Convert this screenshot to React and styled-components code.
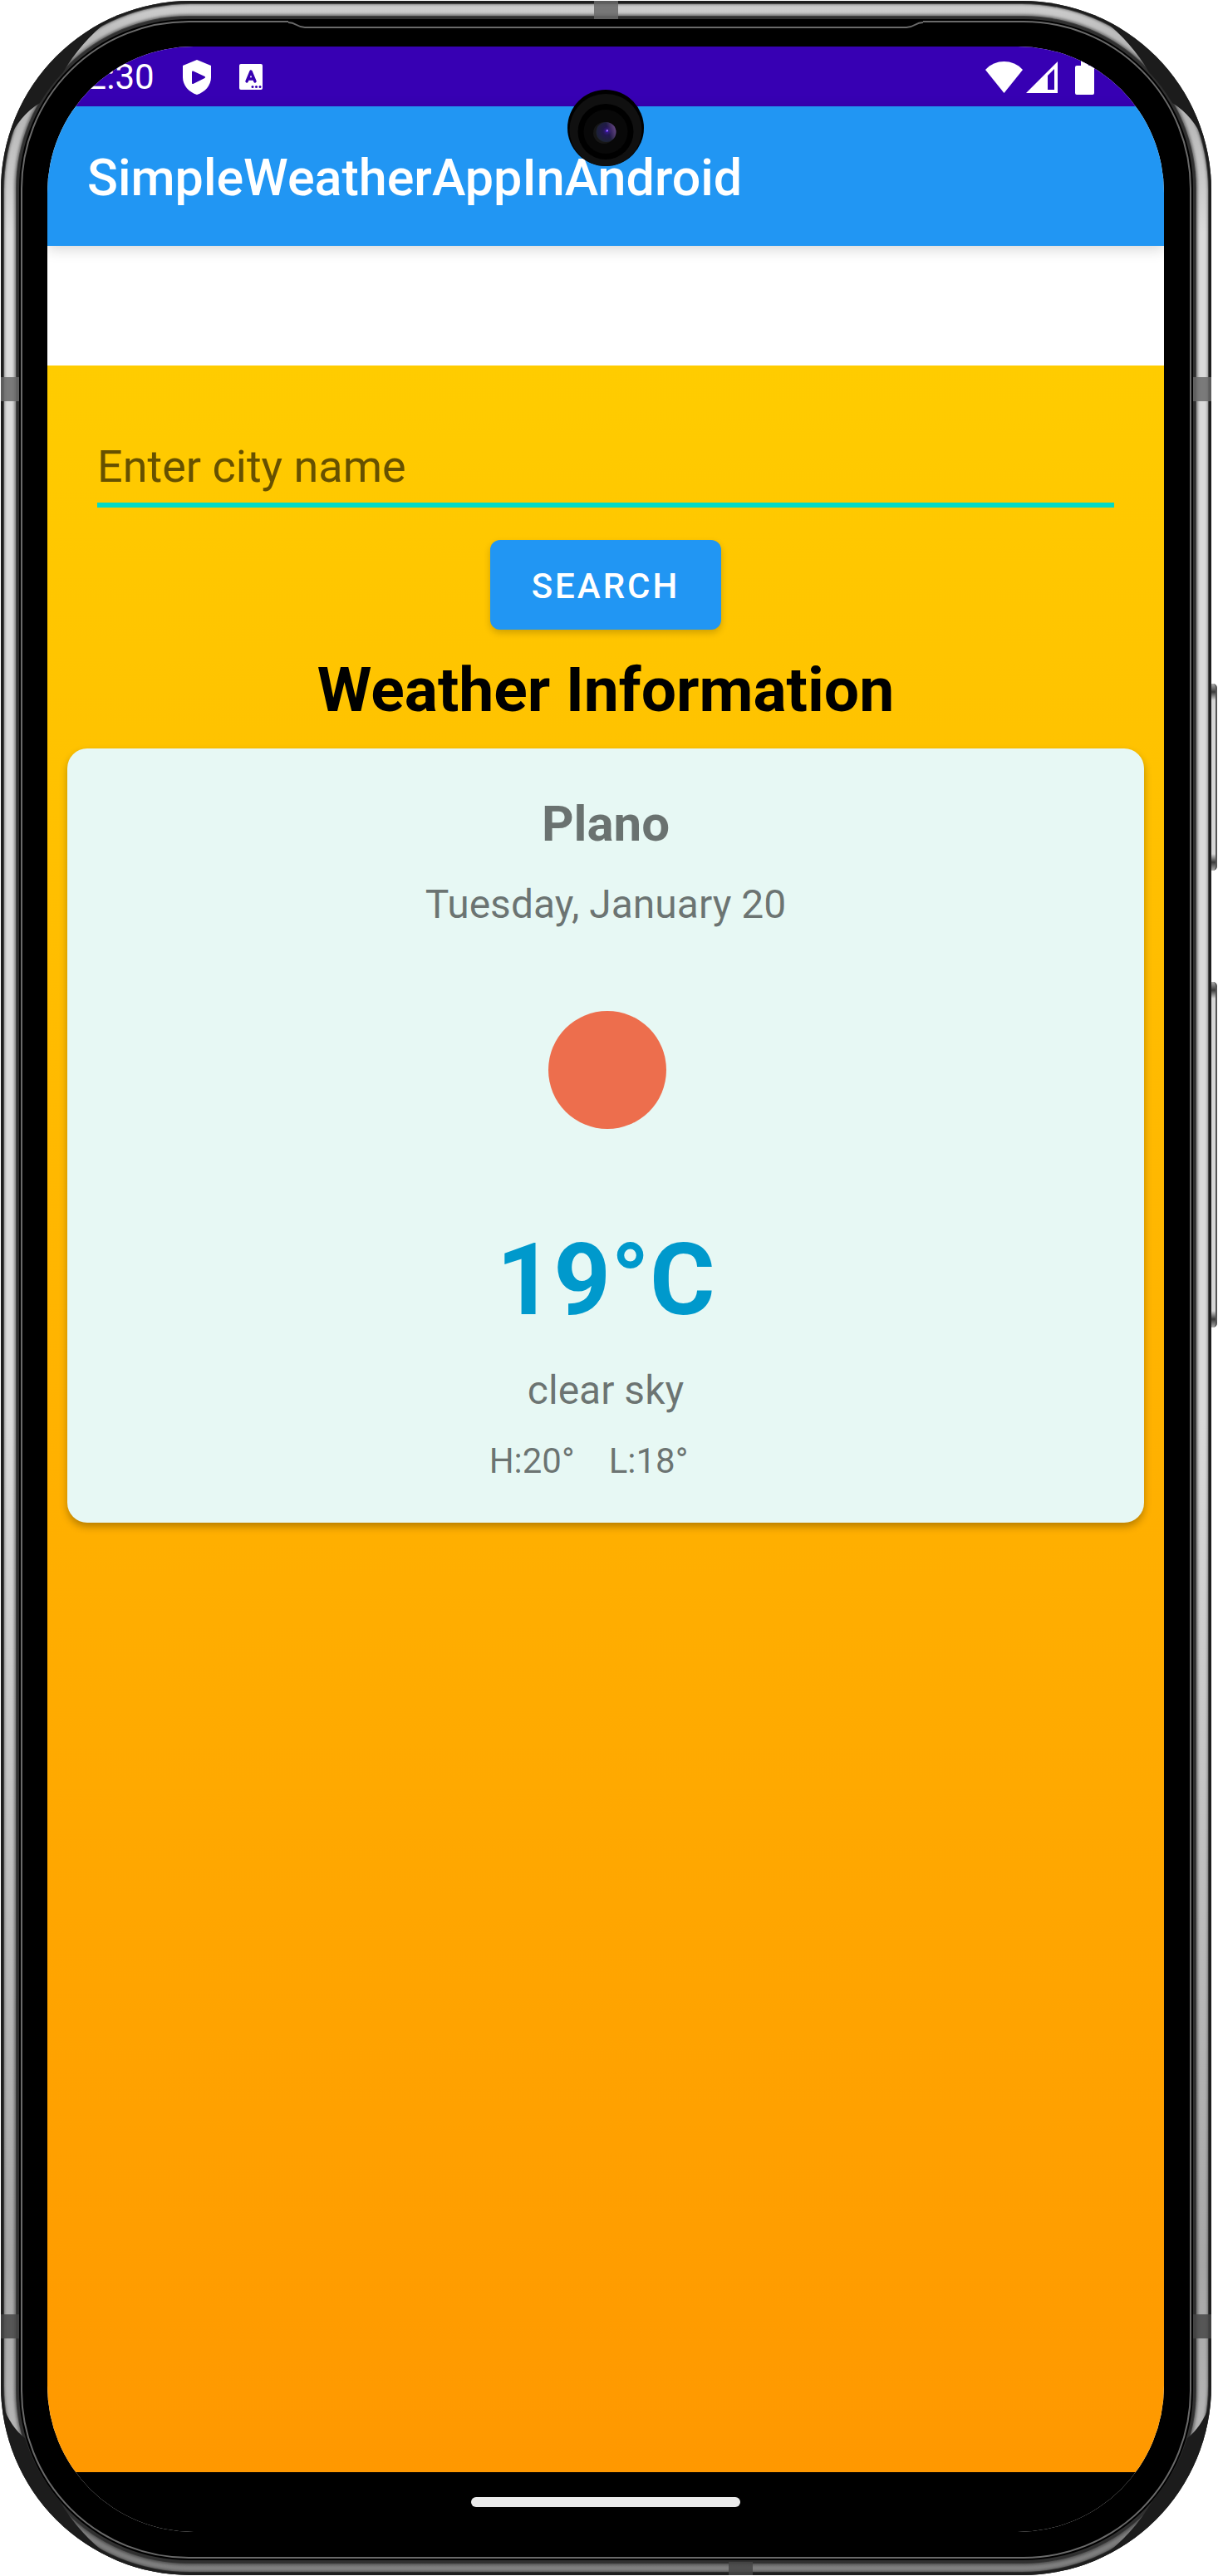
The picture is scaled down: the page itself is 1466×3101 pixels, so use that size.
import React, { useState } from "react";
import styled, { createGlobalStyle, css } from "styled-components";

const GlobalStyle = createGlobalStyle`
  *, *::before, *::after { box-sizing: border-box; }
  body {
    margin: 0;
    background: #ffffff;
    font-family: Roboto, "Noto Sans", sans-serif;
  }
`;

/* ---------- device chassis ---------- */

const Page = styled.div`
  display: flex;
  min-height: 100vh;
  padding: 1px 8px 1px 1px;
`;

const Phone = styled.div`
  position: relative;
  display: flex;
  flex: 1;
  min-width: 0;
  padding: 24px 24px 20px;
  border-radius: 228px;
  background: linear-gradient(
    to bottom,
    #d0d0d0 0,
    #a8a8a8 80px,
    #dadada 280px,
    #dadada 55%,
    #a6a6a6 88%,
    #b4b4b4 94%,
    #7c7c7c 98%,
    #808080 100%
  );
  box-shadow:
    inset 0 0 0 3px #1e1e1e,
    inset 0 0 0 4px rgba(0, 0, 0, 0.5),
    inset 0 0 3px 5px rgba(0, 0, 0, 0.35);
`;

const Bezel = styled.div`
  display: flex;
  flex: 1;
  min-width: 0;
  padding: 29px 31px 30px 30px;
  border: 2px solid #6a6a6a;
  border-radius: 202px;
  background: #000000;
  box-shadow:
    0 0 0 2px #000000,
    0 0 0 5px #303030,
    0 0 0 6px rgba(40, 40, 40, 0.7),
    0 0 3px 8px rgba(30, 30, 30, 0.45);
`;

const SideButton = styled.span`
  position: absolute;
  top: ${(p) => p.$top}px;
  right: -7px;
  width: 7px;
  height: ${(p) => p.$height}px;
  border-right: 2px solid #555555;
  border-radius: 0 5px 5px 0;
  background: linear-gradient(
    to bottom,
    #b0b0b0 0,
    #3a3a3a 10px,
    #d6d6d6 20px,
    #d6d6d6 calc(100% - 20px),
    #3a3a3a calc(100% - 10px),
    #b0b0b0 100%
  );
`;

const AntennaBand = styled.span`
  position: absolute;
  background: ${(p) => (p.$dim ? "rgba(70, 70, 70, 0.85)" : "rgba(104, 104, 104, 0.85)")};
  ${(p) =>
    p.$edge === "left" || p.$edge === "right"
      ? css`
          width: 22px;
          height: 29px;
        `
      : css`
          width: 29px;
          height: ${p.$edge === "top" ? 22 : 16}px;
        `}
  ${(p) => p.$edge}: 0;
  ${(p) => p.$from}: ${(p) => p.$offset};
`;

const CornerShade = styled.svg`
  position: absolute;
  width: 240px;
  height: 240px;
  pointer-events: none;
  ${(p) => p.$y}: 0;
  ${(p) => p.$x}: 0;
  transform: scale(${(p) => (p.$x === "right" ? -1 : 1)}, ${(p) => (p.$y === "bottom" ? -1 : 1)});
`;

const Speaker = styled.div`
  position: absolute;
  top: 23px;
  left: 346px;
  right: 347px;
  display: flex;
  height: 10px;
  background: #000000;
`;

const SpeakerLine = styled.span`
  flex: 1;
  align-self: flex-end;
  height: 2px;
  background: #6a6a6a;
`;

const Camera = styled.svg`
  position: absolute;
  top: 107px;
  left: calc(50% - 47px);
  width: 92px;
  height: 92px;
`;

/* ---------- screen ---------- */

const Screen = styled.div`
  display: flex;
  flex: 1;
  flex-direction: column;
  min-width: 0;
  overflow: hidden;
  border-radius: 176px;
  background: #ffffff;
`;

const StatusBar = styled.div`
  display: flex;
  align-items: center;
  justify-content: space-between;
  height: 72px;
  padding: 2px 84px 0 24px;
  background: #3700b3;
  color: #ffffff;
`;

const StatusGroup = styled.div`
  display: flex;
  align-items: center;
  gap: ${(p) => p.$gap}px;
`;

const Clock = styled.span`
  font-size: 42px;
  line-height: 50px;
`;

const AppBar = styled.header`
  position: relative;
  display: flex;
  align-items: center;
  height: 168px;
  padding: 4px 48px 0;
  background: #2196f3;
  box-shadow: 0 4px 16px rgba(0, 0, 0, 0.16);
`;

const AppTitle = styled.h1`
  margin: 0;
  color: #ffffff;
  font-size: 61px;
  font-weight: 500;
  line-height: 70px;
`;

const Main = styled.main`
  display: flex;
  flex: 1;
  flex-direction: column;
  margin-top: 144px;
  padding: 90px 24px 0;
  background: linear-gradient(to bottom, #ffcc00, #ff9800);
`;

const SearchForm = styled.form`
  display: flex;
  flex-direction: column;
  align-items: center;
  gap: 39px;
  padding: 0 36px;
`;

const CityInput = styled.input`
  width: 100%;
  height: 81px;
  padding: 0 0 13px;
  border: 0;
  border-bottom: 6px solid #03dac5;
  border-radius: 0;
  outline: 0;
  background: transparent;
  color: rgba(0, 0, 0, 0.87);
  font-family: inherit;
  font-size: 54px;
  line-height: 62px;

  &::placeholder {
    color: rgba(0, 0, 0, 0.6);
    opacity: 1;
  }
`;

const SearchButton = styled.button`
  padding: 26px 50px 22px;
  border: 0;
  border-radius: 12px;
  background: #2196f3;
  box-shadow: 0 4px 8px rgba(0, 0, 0, 0.18);
  color: #ffffff;
  font-family: inherit;
  font-size: 42px;
  font-weight: 500;
  letter-spacing: 3px;
  line-height: 60px;
  text-transform: uppercase;
  cursor: pointer;
`;

const SectionTitle = styled.h2`
  margin: 28px 0 27px;
  color: #000000;
  font-size: 75px;
  font-weight: 700;
  line-height: 88px;
  text-align: center;
`;

const Card = styled.section`
  display: flex;
  flex-direction: column;
  align-items: center;
  padding: 56px 24px 49px;
  border-radius: 24px;
  background: #e7f8f4;
  box-shadow: 0 5px 10px rgba(0, 0, 0, 0.28);
  color: rgba(0, 0, 0, 0.54);
`;

const City = styled.h3`
  margin: 0 0 34px;
  font-size: 60px;
  font-weight: 700;
  line-height: 70px;
`;

const CardText = styled.p`
  margin: 0;
  font-size: 48px;
  line-height: 56px;
`;

const Sky = styled.svg`
  width: 300px;
  height: 300px;
  margin: 21px 0 32px;
`;

const Temperature = styled.p`
  margin: 0 0 34px;
  color: #0099cc;
  font-size: 120px;
  font-weight: 700;
  line-height: 142px;
`;

const Range = styled.div`
  display: flex;
  margin-top: 32px;
  font-size: 42px;
  line-height: 50px;
`;

const RangeItem = styled.span`
  padding-right: 41px;
`;

const NavBar = styled.div`
  display: flex;
  align-items: center;
  justify-content: center;
  height: 72px;
  background: #000000;
`;

const HomePill = styled.span`
  width: 324px;
  height: 12px;
  border-radius: 6px;
  background: #ebebeb;
`;

/* ---------- drawings ---------- */

const ShieldIcon = () => (
  <svg width="34" height="42" viewBox="0 0 34 42" aria-hidden="true">
    <path fill="#fff" d="M17 0 34 7V21C34 31 26.500 39 17 42 7.500 39 0 31 0 21V7Z" />
    <path fill="#3700b3" stroke="#3700b3" strokeWidth="2" strokeLinejoin="round" d="M12 14.500 26 21 12 28Z" />
  </svg>
);

const KeyboardIcon = () => (
  <svg width="28" height="32" viewBox="0 0 28 32" aria-hidden="true">
    <rect width="28" height="31" rx="2" fill="#fff" />
    <path d="M9 21 14 9 19 21M10.500 18H17.500" fill="none" stroke="#3700b3" strokeWidth="3.400" strokeLinecap="round" strokeLinejoin="round" />
    <circle cx="16" cy="27.500" r="1.500" fill="#3700b3" />
    <circle cx="20.500" cy="27.500" r="1.500" fill="#3700b3" />
    <circle cx="25" cy="27.500" r="1.500" fill="#3700b3" />
  </svg>
);

const WifiIcon = () => (
  <svg width="45" height="38" viewBox="0 0 45 38" aria-hidden="true">
    <path fill="#fff" d="M0 10C12-3.300 33-3.300 45 10L22.500 38Z" />
  </svg>
);

const SignalIcon = () => (
  <svg width="38" height="38" viewBox="0 0 38 38" aria-hidden="true">
    <path fill="#fff" fillRule="evenodd" d="M38 0V38H0ZM34 9 26 17V34H34Z" />
  </svg>
);

const BatteryIcon = () => (
  <svg width="23" height="42" viewBox="0 0 23 42" aria-hidden="true">
    <path fill="#fff" d="M7 0H16V7H21Q23 7 23 9V40Q23 42 21 42H2Q0 42 0 40V9Q0 7 2 7H7Z" />
  </svg>
);

const shadePaths = {
  top: "M8 170A227 227 0 0 1 130 23Q96 50 75 86A209 209 0 0 0 47 123Q22 138 8 170Z",
  bottom: "M2 205A227 227 0 0 1 130 23Q92 52 70 91A209 209 0 0 0 29 165Q12 178 2 205Z",
};

const Shade = ({ x, y }) => (
  <CornerShade $x={x} $y={y} viewBox="0 0 240 240" aria-hidden="true">
    <path fill="#1c1c1c" d={shadePaths[y]} />
  </CornerShade>
);

const FrontCamera = () => (
  <Camera viewBox="0 0 92 92" aria-hidden="true">
    <defs>
      <radialGradient id="lens" cx="0.55" cy="0.45" r="0.6">
        <stop offset="0" stopColor="#3a1c98" />
        <stop offset="0.35" stopColor="#22174f" />
        <stop offset="1" stopColor="#1b2431" />
      </radialGradient>
      <linearGradient id="flare" x1="0" y1="0.6" x2="1" y2="0.3">
        <stop offset="0.6" stopColor="#8a5aa4" stopOpacity="0" />
        <stop offset="1" stopColor="#8a5aa4" stopOpacity="0.7" />
      </linearGradient>
    </defs>
    <circle cx="46" cy="46" r="46" fill="#000" />
    <circle cx="46" cy="48.500" r="43.500" fill="#101010" />
    <circle cx="46" cy="50.500" r="33.500" fill="#000" />
    <circle cx="46" cy="50.500" r="26.500" fill="#080808" />
    <circle cx="44" cy="52" r="13" fill="#161616" />
    <circle cx="46.500" cy="51" r="12" fill="url(#lens)" />
    <circle cx="46.500" cy="51" r="12" fill="url(#flare)" />
    <circle cx="47.500" cy="49.500" r="1.500" fill="#5a24e0" />
    <circle cx="48" cy="49" r="0.800" fill="#e4c8ff" />
  </Camera>
);

const TopSpeaker = () => (
  <Speaker aria-hidden="true">
    <svg width="20" height="10" viewBox="0 0 20 10">
      <path d="M0 3C10 3 10 9 20 9" fill="none" stroke="#6a6a6a" strokeWidth="2" />
    </svg>
    <SpeakerLine />
    <svg width="20" height="10" viewBox="0 0 20 10">
      <path d="M0 9C10 9 10 3 20 3" fill="none" stroke="#6a6a6a" strokeWidth="2" />
    </svg>
  </Speaker>
);

export default function App() {
  const [city, setCity] = useState("");

  return (
    <>
      <GlobalStyle />
      <Page>
        <Phone>
          <Bezel>
            <Screen>
              <StatusBar>
                <StatusGroup $gap={34}>
                  <Clock>12:30</Clock>
                  <ShieldIcon />
                  <KeyboardIcon />
                </StatusGroup>
                <StatusGroup $gap={4}>
                  <WifiIcon />
                  <StatusGroup $gap={21}>
                    <SignalIcon />
                    <BatteryIcon />
                  </StatusGroup>
                </StatusGroup>
              </StatusBar>
              <AppBar>
                <AppTitle>SimpleWeatherAppInAndroid</AppTitle>
              </AppBar>
              <Main>
                <SearchForm onSubmit={(e) => e.preventDefault()}>
                  <CityInput
                    aria-label="Enter city name"
                    placeholder="Enter city name"
                    value={city}
                    onChange={(e) => setCity(e.target.value)}
                  />
                  <SearchButton type="submit">Search</SearchButton>
                </SearchForm>
                <SectionTitle>Weather Information</SectionTitle>
                <Card>
                  <City>Plano</City>
                  <CardText>Tuesday, January 20</CardText>
                  <Sky viewBox="0 0 300 300" aria-hidden="true">
                    <circle cx="152" cy="150" r="71" fill="#ed6e4d" />
                  </Sky>
                  <Temperature>19°C</Temperature>
                  <CardText>clear sky</CardText>
                  <Range>
                    <RangeItem>H:20°</RangeItem>
                    <RangeItem>L:18°</RangeItem>
                  </Range>
                </Card>
              </Main>
              <NavBar>
                <HomePill />
              </NavBar>
            </Screen>
          </Bezel>
          <TopSpeaker />
          <Shade x="left" y="top" />
          <Shade x="right" y="top" />
          <Shade x="left" y="bottom" />
          <Shade x="right" y="bottom" />
          <AntennaBand $edge="top" $from="left" $offset="calc(50% - 15px)" />
          <AntennaBand $edge="left" $from="top" $offset="453px" />
          <AntennaBand $edge="right" $from="top" $offset="453px" />
          <AntennaBand $edge="left" $from="bottom" $offset="285px" $dim />
          <AntennaBand $edge="right" $from="bottom" $offset="285px" $dim />
          <AntennaBand $edge="bottom" $from="right" $offset="552px" $dim />
          <SideButton $top={822} $height={225} />
          <SideButton $top={1181} $height={416} />
          <FrontCamera />
        </Phone>
      </Page>
    </>
  );
}
